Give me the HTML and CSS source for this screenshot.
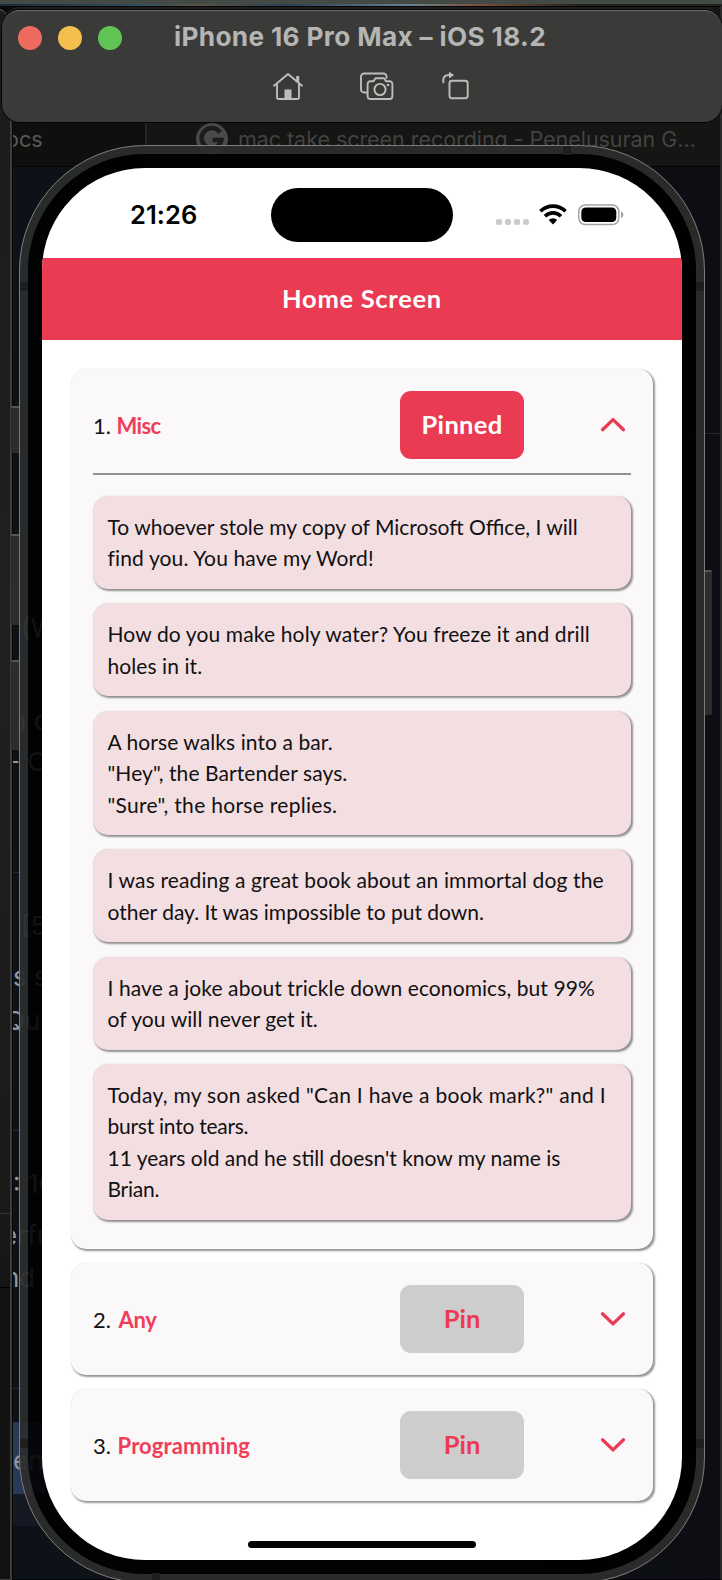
FILE: index.html
```html
<!DOCTYPE html>
<html lang="en">
<head>
<meta charset="utf-8">
<title>Simulator</title>
<link rel="stylesheet" href="styles.css">
</head>
<body>
<div class="desktop">
  <div class="wallpaper"></div>
  <div class="browser">
    <div class="tabs">
      <div class="tab tab-left">ocs</div>
      <div class="tab tab-main">
        <svg class="favicon" width="32" height="32" viewBox="0 0 32 32"><circle cx="16" cy="16" r="16" fill="#4a4a49"/><path d="M24 9.5A10 10 0 1 0 25.5 17H16.5" fill="none" stroke="#1d1d1c" stroke-width="4.5"/></svg>
        <span>mac take screen recording - Penelusuran G…</span>
      </div>
    </div>
    <div class="rule rule-a"></div><div class="rule rule-b"></div><div class="rule rule-c"></div><div class="rule rule-d"></div>
    <div class="selection"></div>
    <span class="frag f1">(W</span><span class="frag f2">n c</span><span class="frag f3">- O</span>
    <span class="frag f4">[5</span><span class="frag f5">s s</span><span class="frag f6">Qu</span>
    <span class="frag f7">: 10</span><span class="frag f8">erfu</span><span class="frag f9">nd</span><span class="frag f10">en</span>
  </div>
  <div class="side-window"><i></i><b></b></div>

  <div class="key action"></div><div class="key vol-up"></div><div class="key vol-down"></div><div class="key power"></div>
  <div class="phone">
    <div class="bezel">
      <div class="screen">
        <div class="status">
          <span class="time">21:26</span>
          <div class="island"></div>
          <div class="signals">
            <div class="dots"><i></i><i></i><i></i><i></i></div>
            <svg class="wifi" width="28" height="21" viewBox="0 0 28 21"><g fill="none" stroke="#000" stroke-width="3.6"><path d="M1.4 7.3a18 18 0 0 1 25.2 0"/><path d="M6 12.2a11.4 11.4 0 0 1 16 0"/></g><path d="M14 20.4l4.3-4.4a6.2 6.2 0 0 0-8.6 0z"/></svg>
            <svg width="46" height="22" viewBox="0 0 46 22"><rect x=".8" y="1" width="40" height="19.6" rx="6.5" fill="none" stroke="#a3a3a3" stroke-width="1.5"/><rect x="3.3" y="3.6" width="35" height="14.4" rx="4.3"/><path d="M43 7.3c1.7.7 2.3 2 2.3 3.5s-.6 2.8-2.3 3.5z" fill="#a3a3a3"/></svg>
          </div>
        </div>
        <header class="header">Home Screen</header>
        <main class="list">
          <section class="card">
            <div class="row">
              <div class="name">1. <b class="misc">Misc</b></div>
              <div class="pin pinned">Pinned</div>
              <svg class="chevron" width="28" height="16" viewBox="0 0 28 16"><path d="M3.5 12.7L14 2.6l10.5 10.1"/></svg>
            </div>
            <div class="divider"></div>
            <div class="jokes">
              <p class="joke"><span>To whoever stole my copy of Microsoft Office, I will</span><span class="s15">find you. You have my Word!</span></p>
              <p class="joke"><span class="s15">How do you make holy water? You freeze it and drill</span><span class="s10">holes in it.</span></p>
              <p class="joke"><span class="s10">A horse walks into a bar.</span><span class="s10">"Hey", the Bartender says.</span><span class="s30">"Sure", the horse replies.</span></p>
              <p class="joke"><span class="s15">I was reading a great book about an immortal dog the</span><span>other day. It was impossible to put down.</span></p>
              <p class="joke"><span class="s10">I have a joke about trickle down economics, but 99%</span><span class="s10">of you will never get it.</span></p>
              <p class="joke"><span class="s30">Today, my son asked "Can I have a book mark?" and I</span><span class="tight">burst into tears.</span><span>11 years old and he still doesn't know my name is</span><span class="tight">Brian.</span></p>
            </div>
          </section>
          <section class="card">
            <div class="row">
              <div class="name">2. <b class="any">Any</b></div>
              <div class="pin">Pin</div>
              <svg class="chevron" width="28" height="16" viewBox="0 0 28 16"><path d="M3.5 2.8L14 12.9 24.5 2.8"/></svg>
            </div>
          </section>
          <section class="card">
            <div class="row">
              <div class="name">3. <b class="prog">Programming</b></div>
              <div class="pin">Pin</div>
              <svg class="chevron" width="28" height="16" viewBox="0 0 28 16"><path d="M3.5 2.8L14 12.9 24.5 2.8"/></svg>
            </div>
          </section>
        </main>
        <div class="home-bar"></div>
      </div>
    </div>
    <i class="seam seam-lt"></i><i class="seam seam-rt"></i><i class="seam seam-lb"></i><i class="seam seam-rb"></i><i class="seam seam-t"></i><i class="seam seam-b"></i>
  </div>

  <div class="toolbar">
    <div class="titlebar">
      <div class="lights"><i class="red"></i><i class="yellow"></i><i class="green"></i></div>
      <div class="title">iPhone 16 Pro Max – iOS 18.2</div>
    </div>
    <div class="tools">
      <svg width="32" height="30" viewBox="0 0 32 30"><g fill="none" stroke="#bdbdbb" stroke-width="1.9" stroke-linecap="round" stroke-linejoin="round"><path d="M2 14.7L16 3l14 11.7M5 12.8V26.5a1.5 1.5 0 0 0 1.5 1.5h19a1.5 1.5 0 0 0 1.5-1.5V12.8"/></g><path d="M24.2 5h3v7.3l-3-2.5zM12.5 18.5h7v10h-7z" fill="#bdbdbb"/></svg>
      <svg width="34" height="30" viewBox="0 0 34 30"><g fill="none" stroke="#bdbdbb" stroke-width="1.9" stroke-linejoin="round" stroke-linecap="round"><path d="M7.3 21.5H4A3 3 0 0 1 1 18.5V5.5a3 3 0 0 1 3-3h19.5a3 3 0 0 1 3 3V7"/><path d="M10.3 10.3h3.2l2-3.1h8.500l2 3.100h3.700a2.700 2.700 0 0 1 2.700 2.700v12.300a2.700 2.700 0 0 1-2.700 2.700H10.300a2.700 2.700 0 0 1-2.700-2.700V13a2.700 2.700 0 0 1 2.700-2.700z"/><circle cx="20" cy="18.5" r="5.6"/></g><circle cx="28" cy="14" r="1.3" fill="#bdbdbb"/></svg>
      <svg width="28" height="30" viewBox="0 0 28 30"><g fill="none" stroke="#bdbdbb" stroke-width="1.9" stroke-linecap="round"><rect x="7.5" y="9.7" width="18.2" height="17.5" rx="2.5"/><path d="M1.3 11.3V9.5C1.3 6 3.5 4 7 4"/></g><path d="M7 .8L12.2 4.1 7 7.4z" fill="#bdbdbb"/></svg>
    </div>
  </div>
</div>
</body>
</html>
```
FILE: styles.css
```css
* { box-sizing: border-box; }
body { margin: 0; background: #0c0f14; }

.desktop { position: relative; width: 722px; height: 1580px; overflow: hidden; background: #090909; font-family: Lato, sans-serif; }
.wallpaper { height: 6px; background: linear-gradient(#434a46 0 4px, transparent 4px), linear-gradient(90deg, #1c2a33, #31505d 20%, #5b5340 27%, #2a4053 40%, #6a8291 57%, #7a5337 66%, #24221c 80%); }

/* Browser window behind the simulator */
.browser { position: absolute; inset: 6px 0 0 12px; background: linear-gradient(90deg, #0d1219, #0c0e13); border: 1px solid #050505; border-right: 2px solid #2b2b2d; font-family: Inter, sans-serif; overflow: hidden; }
.tabs { display: flex; height: 160px; border-bottom: 1px solid #020202; background: #151514; color: #434342; font-size: 21.5px; line-height: 26px; }
.tab { padding-top: 119px; white-space: nowrap; }
.tab-left { width: 134px; background: #0f0f0e; border-right: 2px solid #242423; text-indent: -7px; color: #5a5a59; }
.tab-main { flex: 1; display: flex; gap: 10px; padding-left: 49px; letter-spacing: -.05px; }
.favicon { flex: none; margin-top: -3px; }
.rule { position: absolute; left: 0; right: 0; height: 1px; background: #25282e; }
.rule-a { top: 426px; }
.rule-b { top: 865px; width: 30px; background: #202a3d; }
.rule-c { top: 1123px; width: 30px; background: #202a3d; }
.rule-d { top: 1381px; width: 30px; background: #202a3d; }
.selection { position: absolute; left: 0; top: 1415px; width: 32px; height: 104px; background: linear-gradient(#293a58 72px, #141923 72px); }
.frag { position: absolute; left: 0; color: #9297a0; font-size: 26px; line-height: 32px; white-space: pre; }
.f1 { top: 605px; left: 8px; }
.f2 { top: 698px; left: -2px; }
.f3 { top: 739px; left: -5px; }
.f4 { top: 903px; left: 8px; }
.f5 { top: 954px; }
.f6 { top: 998px; left: -8px; }
.f7 { top: 1161px; }
.f8 { top: 1213px; left: -11px; }
.f9 { top: 1255px; left: -9px; }
.f10 { top: 1438px; }

.side-window { position: absolute; left: -30px; top: 7px; width: 42px; bottom: 0; border-right: 2px solid #3d3d3c; border-top: 1px solid #555; border-radius: 0 20px 0 0; background: linear-gradient(#1b1b1b, #202020 40%, #1a1a1a 75%, #131313 85%); }
.side-window i, .side-window b { position: absolute; left: 0; right: 0; height: 1px; top: 1205px; background: #333; }
.side-window b { top: 1279px; height: 293px; border-top: 1px solid #000; border-bottom: 1px solid #3a3a3a; background: #121212; }

/* Phone body */
.key { position: absolute; left: 11px; width: 9px; background: #2c2c2c; border-top: 2px solid #555; border-radius: 2px 0 0 2px; }
.action { top: 406px; height: 47px; }
.vol-up { top: 534px; height: 91px; }
.vol-down { top: 660px; height: 90px; }
.power { left: 704px; width: 8px; top: 570px; height: 145px; border-radius: 0 2px 2px 0; }
.phone { position: absolute; left: 19px; top: 145px; width: 686px; height: 1438px; border-radius: 126px; border: 9px solid rgba(44,44,44,.93); }
.phone::after { content: ""; position: absolute; inset: -9px; border: 1px solid #7c7b78; border-radius: 126px; }
.bezel { height: 100%; border: 14px solid rgba(0,0,0,.88); border-radius: 117px; }
.seam { position: absolute; width: 8px; height: 9px; background: #1e1e1e; }
.seam-lt { left: -8px; top: 128px; }
.seam-rt { right: -8px; top: 128px; }
.seam-lb { left: -8px; top: 1285px; }
.seam-rb { right: -8px; top: 1285px; }
.seam-t { left: 535px; top: -8px; }
.seam-b { left: 124px; bottom: -8px; }

.screen { height: 100%; border-radius: 103px; overflow: hidden; background: #fff; display: flex; flex-direction: column; }
.status { height: 90px; display: flex; align-items: flex-start; padding: 20px 0 0 88px; }
.time { width: 141px; padding-top: 11px; font: 600 25.5px/32px Inter, sans-serif; letter-spacing: .1px; color: #000; }
.island { width: 182px; height: 54px; border-radius: 27px; background: #000; }
.signals { display: flex; align-items: flex-start; padding: 16px 0 0 43px; }
.dots { display: flex; gap: 3px; padding: 15px 10px 0 0; }
.dots i { width: 6px; height: 6px; border-radius: 2px; background: #ccc; }
.wifi { margin-right: 11px; }
.header { height: 82px; flex: none; background: #eb3b53; color: #fff; text-align: center; font-weight: 700; font-size: 25.5px; line-height: 80px; letter-spacing: .7px; }
.list { padding: 29px 29px 0; display: flex; flex-direction: column; gap: 14px; }
.card { padding: 22px; border-radius: 15px; background: #faf8f9; box-shadow: 1.5px 1.5px 2px rgba(0,0,0,.42), 0 0 1px rgba(0,0,0,.12); }
.card:first-child { padding-bottom: 29px; }
.row { display: flex; align-items: center; height: 68px; }
.name { width: 307px; padding-top: 1px; font-size: 22px; color: #111; white-space: pre; }
.name b { color: #f03e58; font-weight: 700; }
.misc { letter-spacing: -.7px; }
.any { letter-spacing: -.3px; margin-left: 2px; }
.prog { letter-spacing: .1px; margin-left: 1px; }
.pin { width: 124px; height: 68px; border-radius: 11px; background: #cdcdcd; color: #eb3b53; text-align: center; font-weight: 700; font-size: 25.5px; line-height: 67px; }
.pinned { background: #eb3b53; color: #fff; letter-spacing: .3px; }
.chevron { margin-left: 75px; fill: none; stroke: #eb3b53; stroke-width: 3.3; stroke-linecap: round; stroke-linejoin: round; }
.divider { height: 2px; margin: 14px 0 21px; background: #929092; }
.jokes { display: flex; flex-direction: column; gap: 14.4px; }
.joke { margin: 0; padding: 15px 14.5px; border-radius: 15px; background: #f3dee2; box-shadow: 1.5px 1.5px 2px rgba(0,0,0,.42), 0 0 1px rgba(0,0,0,.1); font-size: 21px; line-height: 31.45px; color: #111; }
.joke span { display: block; white-space: nowrap; }
.s10 { letter-spacing: .08px; }
.s15 { letter-spacing: .13px; }
.s30 { letter-spacing: .3px; }
.tight { letter-spacing: -.25px; }
.home-bar { width: 228px; height: 7px; margin: auto auto 12px; border-radius: 4px; background: #000; }

/* Simulator toolbar */
.toolbar { position: absolute; left: 2px; top: 10px; width: 720px; height: 112px; border-radius: 18px; background: #3a3a38; border-top: 1px solid #6b6b69; box-shadow: 0 0 0 1px #050505, 0 -3px 0 #1d1d1d; }
.titlebar { display: flex; padding: 0 0 0 16px; height: 54px; }
.lights { display: flex; gap: 16px; padding-top: 15px; width: 156px; }
.lights i { width: 24px; height: 24px; border-radius: 50%; }
.red { background: #ed6a5e; }
.yellow { background: #f5bf4f; }
.green { background: #61c454; }
.title { padding-top: 11px; font: 700 26.2px/30px Inter, sans-serif; letter-spacing: .35px; color: #b5b5b3; white-space: nowrap; }
.tools { display: flex; padding: 6px 0 0 270px; }
.tools svg:nth-child(2) { margin-left: 56px; }
.tools svg:nth-child(3) { margin-left: 48px; }
```
